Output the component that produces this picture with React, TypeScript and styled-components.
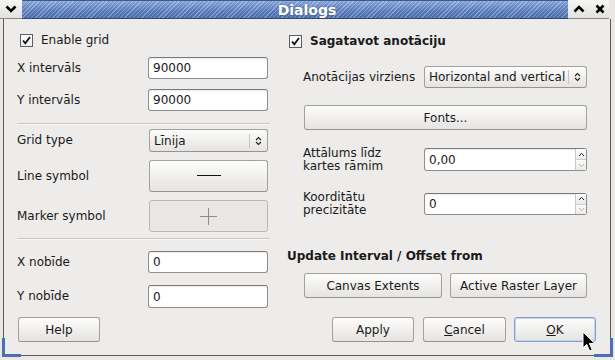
import React from "react";
import styled, { createGlobalStyle, css } from "styled-components";

const Global = createGlobalStyle`
  html, body { margin: 0; padding: 0; background: #edeceb; }
  body {
    font-family: "DejaVu Sans", "Liberation Sans", sans-serif;
    font-size: 12px;
    color: #1a1a1a;
  }
  * { box-sizing: border-box; }
`;

const Window = styled.div`
  position: relative;
  width: 615px;
  height: 360px;
  background: #e9e8e6;
  display: flex;
  flex-direction: column;
  overflow: hidden;
`;

const TitleBar = styled.div`
  height: 19px;
  display: flex;
  flex-shrink: 0;
`;

const TitleButton = styled.div<{ $w: number }>`
  width: ${(p) => p.$w}px;
  height: 19px;
  display: flex;
  align-items: center;
  justify-content: center;
  background: linear-gradient(#f6f6f5, #e2e1df);
  border-bottom: 1px solid #8a8a8a;
`;

const Stripe = styled.div`
  flex: 1;
  height: 19px;
  display: flex;
  align-items: center;
  justify-content: center;
  padding-left: 24px;
  border-bottom: 1px solid #2d4a80;
  border-top: 1px solid #3c5a92;
  background:
    repeating-linear-gradient(
      135deg,
      rgba(255, 255, 255, 0.28) 0px,
      rgba(255, 255, 255, 0.28) 1px,
      rgba(255, 255, 255, 0) 1px,
      rgba(255, 255, 255, 0) 3px
    ),
    linear-gradient(#86a3d6, #5a7cbc 55%, #4a6aa8);
  color: #ffffff;
  font-weight: bold;
  font-size: 14px;
  text-shadow: 0 0 2px rgba(30, 50, 90, 0.6);
`;

const FrameEdge = styled.div`
  width: 6px;
  height: 19px;
  background: #e9e8e6;
`;

const Body = styled.div`
  flex: 1;
  margin: 0 4px 4px 3px;
  background: #edeceb;
  border: 1px solid #5b5b5b;
  border-top: none;
  display: flex;
  flex-direction: column;
`;

const Main = styled.div`
  display: flex;
  align-items: flex-start;
  gap: 17px;
  padding: 13px 0 0 13px;
`;

const Column = styled.div<{ $w: number }>`
  width: ${(p) => p.$w}px;
  display: flex;
  flex-direction: column;
`;

const CheckRow = styled.label<{ $mt?: number; $indent: number; $bold?: boolean }>`
  display: flex;
  align-items: center;
  gap: 8px;
  height: 16px;
  margin-top: ${(p) => p.$mt ?? 0}px;
  padding-left: ${(p) => p.$indent}px;
  font-weight: ${(p) => (p.$bold ? "bold" : "normal")};
`;

const Box = styled.span`
  width: 13px;
  height: 13px;
  border: 1px solid #5e5e5e;
  background: linear-gradient(#ffffff, #f0f0ef);
  display: flex;
  align-items: center;
  justify-content: center;
`;

const Row = styled.div<{ $mt: number; $h: number; $indent?: number }>`
  display: flex;
  align-items: center;
  justify-content: space-between;
  height: ${(p) => p.$h}px;
  margin-top: ${(p) => p.$mt}px;
  padding-left: ${(p) => p.$indent ?? 0}px;
`;

const Label = styled.span`
  line-height: 13px;
  white-space: nowrap;
`;

const Heading = styled.div<{ $mt: number }>`
  margin-top: ${(p) => p.$mt}px;
  height: 16px;
  line-height: 16px;
  font-weight: bold;
`;

const Separator = styled.div<{ $mt: number }>`
  height: 1px;
  margin-top: ${(p) => p.$mt}px;
  background: #c9c8c5;
  border-bottom: 1px solid #f8f8f7;
  box-sizing: content-box;
`;

const Input = styled.div<{ $w: number; $mr?: number }>`
  width: ${(p) => p.$w}px;
  height: 100%;
  margin-right: ${(p) => p.$mr ?? 0}px;
  background: #ffffff;
  border: 1px solid #8f8e8c;
  border-top-color: #7c7b79;
  border-radius: 3px;
  box-shadow: inset 0 1px 1px rgba(0, 0, 0, 0.08);
  display: flex;
  align-items: center;
  padding-left: 4px;
  position: relative;
`;

const buttonLook = css`
  background: linear-gradient(#fdfdfc, #f1f0ef 50%, #e5e4e2);
  border: 1px solid #a2a19f;
  border-bottom-color: #959492;
  border-radius: 3px;
`;

const Combo = styled.div<{ $w: number; $mr?: number; $pad: number }>`
  ${buttonLook};
  width: ${(p) => p.$w}px;
  height: 100%;
  margin-right: ${(p) => p.$mr ?? 0}px;
  display: flex;
  align-items: center;
  padding-left: ${(p) => p.$pad}px;
`;

const ComboText = styled.span`
  flex: 1;
  white-space: nowrap;
  overflow: hidden;
`;

const ComboArrow = styled.span`
  width: 18px;
  height: 14px;
  border-left: 1px solid #c6c5c3;
  display: flex;
  align-items: center;
  justify-content: center;
`;

const Button = styled.div<{ $w: number; $h?: number; $mr?: number; $focus?: boolean; $disabled?: boolean }>`
  ${buttonLook};
  width: ${(p) => p.$w}px;
  height: ${(p) => p.$h ?? 25}px;
  margin-right: ${(p) => p.$mr ?? 0}px;
  display: flex;
  align-items: center;
  justify-content: center;
  white-space: nowrap;
  ${(p) =>
    p.$focus &&
    css`
      border-color: #7f9dcf;
      box-shadow: inset 0 0 0 1px #c7d6ee;
    `}
  ${(p) =>
    p.$disabled &&
    css`
      background: #e8e7e5;
      border-color: #b9b8b6;
    `}
`;

const ButtonRow = styled.div<{ $mt: number; $indent: number }>`
  display: flex;
  gap: 8px;
  margin-top: ${(p) => p.$mt}px;
  padding-left: ${(p) => p.$indent}px;
`;

const SpinButtons = styled.div`
  position: absolute;
  right: 0;
  top: 0;
  bottom: 0;
  width: 11px;
  display: flex;
  flex-direction: column;
  border-left: 1px solid #c9c8c6;
`;

const SpinHalf = styled.div`
  flex: 1;
  display: flex;
  align-items: center;
  justify-content: center;
  background: linear-gradient(#fbfbfb, #ecebea);
  & + & {
    border-top: 1px solid #d0cfcd;
  }
`;

const Footer = styled.div`
  display: flex;
  align-items: center;
  margin-top: 9px;
  padding: 0 14px;
`;

const Spacer = styled.div`
  flex: 1;
`;

const FooterButtons = styled.div`
  display: flex;
  gap: 9px;
`;

const Corner = styled.div<{ $side: "left" | "right" }>`
  position: absolute;
  bottom: 3px;
  ${(p) => (p.$side === "left" ? "left: 2px;" : "right: 2px;")}
  width: 19px;
  height: 19px;
  border-bottom: 3px solid #4c6fb6;
  ${(p) =>
    p.$side === "left"
      ? "border-left: 3px solid #4c6fb6;"
      : "border-right: 3px solid #4c6fb6;"}
`;

const Cursor = styled.svg`
  position: absolute;
  left: 582px;
  top: 331px;
`;

const Check = () => (
  <svg width="11" height="11" viewBox="0 0 11 11">
    <path d="M2 5.5 L4.3 8.3 L9 2" fill="none" stroke="#111" strokeWidth="1.8" />
  </svg>
);

const UpDown = () => (
  <svg width="7" height="10" viewBox="0 0 7 10">
    <path d="M1 4 L3.5 1.5 L6 4 M1 6 L3.5 8.5 L6 6" fill="none" stroke="#222" strokeWidth="1.1" />
  </svg>
);

const SmallArrow = ({ up, color }: { up: boolean; color: string }) => (
  <svg width="7" height="5" viewBox="0 0 7 5">
    <path d={up ? "M1 4 L3.5 1.3 L6 4" : "M1 1 L3.5 3.7 L6 1"} fill="none" stroke={color} strokeWidth="1" />
  </svg>
);

const Spin = ({ value }: { value: string }) => (
  <Input $w={163}>
    {value}
    <SpinButtons>
      <SpinHalf>
        <SmallArrow up color="#222" />
      </SpinHalf>
      <SpinHalf>
        <SmallArrow up={false} color="#b5b5b5" />
      </SpinHalf>
    </SpinButtons>
  </Input>
);

export default function App() {
  return (
    <>
      <Global />
      <Window>
        <TitleBar>
          <TitleButton $w={22}>
            <svg width="12" height="8" viewBox="0 0 12 8">
              <path d="M1.5 1.5 L6 6 L10.5 1.5" fill="none" stroke="#000" strokeWidth="2.6" />
            </svg>
          </TitleButton>
          <Stripe>Dialogs</Stripe>
          <TitleButton $w={22}>
            <svg width="12" height="8" viewBox="0 0 12 8">
              <path d="M1.5 6.5 L6 2 L10.5 6.5" fill="none" stroke="#000" strokeWidth="2.6" />
            </svg>
          </TitleButton>
          <TitleButton $w={19}>
            <svg width="10" height="10" viewBox="0 0 10 10">
              <path d="M1.5 1.5 L8.5 8.5 M8.5 1.5 L1.5 8.5" fill="none" stroke="#000" strokeWidth="2.6" />
            </svg>
          </TitleButton>
          <FrameEdge />
        </TitleBar>
        <Body>
          <Main>
            <Column $w={253}>
              <CheckRow $indent={3}>
                <Box>
                  <Check />
                </Box>
                Enable grid
              </CheckRow>
              <Row $mt={9} $h={22}>
                <Label>X intervāls</Label>
                <Input $w={120} $mr={2}>90000</Input>
              </Row>
              <Row $mt={10} $h={22}>
                <Label>Y intervāls</Label>
                <Input $w={120} $mr={2}>90000</Input>
              </Row>
              <Separator $mt={12} />
              <Row $mt={4} $h={23}>
                <Label>Grid type</Label>
                <Combo $w={119} $mr={2} $pad={4}>
                  <ComboText>Līnija</ComboText>
                  <ComboArrow>
                    <UpDown />
                  </ComboArrow>
                </Combo>
              </Row>
              <Row $mt={8} $h={32}>
                <Label>Line symbol</Label>
                <Button $w={119} $h={32} $mr={2}>
                  <svg width="24" height="2" viewBox="0 0 24 2">
                    <rect x="0" y="0" width="24" height="1" fill="#111" />
                  </svg>
                </Button>
              </Row>
              <Row $mt={8} $h={32}>
                <Label>Marker symbol</Label>
                <Button $w={119} $h={32} $mr={2} $disabled>
                  <svg width="17" height="17" viewBox="0 0 17 17">
                    <path d="M8.5 0 V17 M0 8.5 H17" stroke="#8c8c8c" strokeWidth="1" />
                  </svg>
                </Button>
              </Row>
              <Separator $mt={6} />
              <Row $mt={11} $h={22}>
                <Label>X nobīde</Label>
                <Input $w={120} $mr={2}>0</Input>
              </Row>
              <Row $mt={12} $h={23}>
                <Label>Y nobīde</Label>
                <Input $w={120} $mr={2}>0</Input>
              </Row>
            </Column>
            <Column $w={300}>
              <CheckRow $indent={2} $mt={1} $bold>
                <Box>
                  <Check />
                </Box>
                Sagatavot anotāciju
              </CheckRow>
              <Row $mt={17} $h={22} $indent={16}>
                <Label>Anotācijas virziens</Label>
                <Combo $w={163} $pad={4}>
                  <ComboText>Horizontal and vertical</ComboText>
                  <ComboArrow>
                    <UpDown />
                  </ComboArrow>
                </Combo>
              </Row>
              <ButtonRow $mt={17} $indent={17}>
                <Button $w={283}>Fonts...</Button>
              </ButtonRow>
              <Row $mt={18} $h={23} $indent={16}>
                <Label>
                  Attālums līdz
                  <br />
                  kartes rāmim
                </Label>
                <Spin value="0,00" />
              </Row>
              <Row $mt={22} $h={22} $indent={16}>
                <Label>
                  Koorditātu
                  <br />
                  precizitāte
                </Label>
                <Spin value="0" />
              </Row>
              <Heading $mt={33}>Update Interval / Offset from</Heading>
              <ButtonRow $mt={9} $indent={17}>
                <Button $w={138}>Canvas Extents</Button>
                <Button $w={137}>Active Raster Layer</Button>
              </ButtonRow>
            </Column>
          </Main>
          <Footer>
            <Button $w={82}>Help</Button>
            <Spacer />
            <FooterButtons>
              <Button $w={82}>Apply</Button>
              <Button $w={83} $mr={-1}>
                <span>
                  <u>C</u>ancel
                </span>
              </Button>
              <Button $w={82} $focus>
                <span>
                  <u>O</u>K
                </span>
              </Button>
            </FooterButtons>
          </Footer>
        </Body>
        <Corner $side="left" />
        <Corner $side="right" />
        <Cursor width="14" height="22" viewBox="0 0 14 22">
          <path
            d="M1 1 L1 17 L4.8 13.4 L7.6 20 L10.2 18.8 L7.4 12.4 L12.6 12.4 Z"
            fill="#000"
            stroke="#fff"
            strokeWidth="1"
            strokeLinejoin="round"
          />
        </Cursor>
      </Window>
    </>
  );
}
